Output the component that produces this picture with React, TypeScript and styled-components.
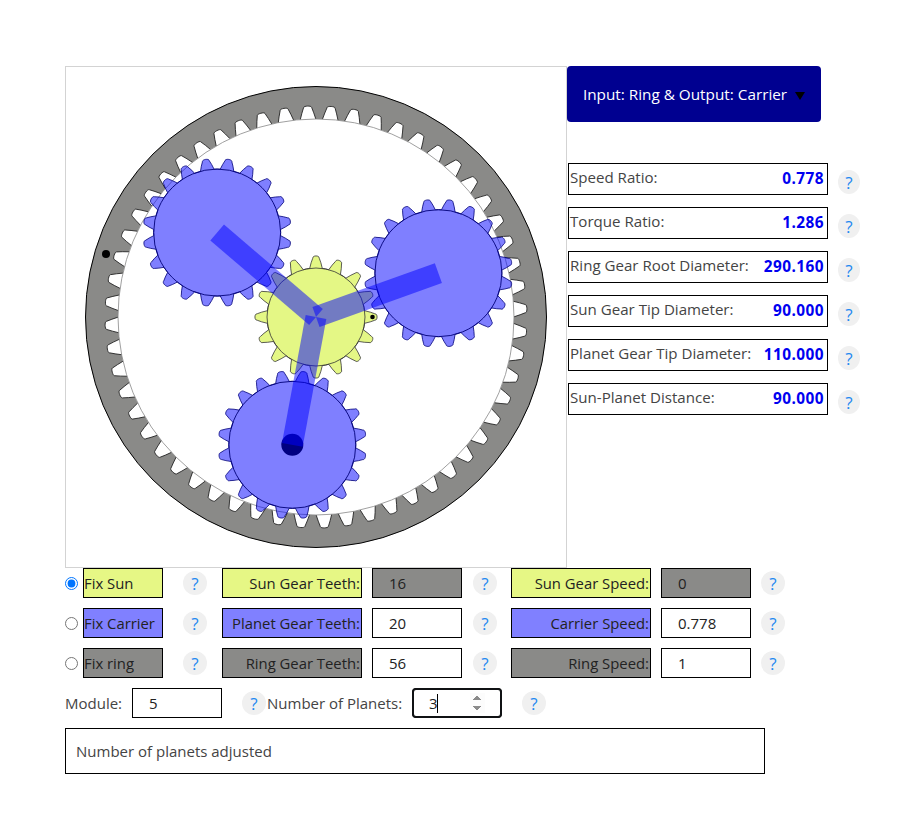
import React from 'react';
import styled, { createGlobalStyle } from 'styled-components';

const Global = createGlobalStyle`
  html, body { margin: 0; padding: 0; background: #fff; }
  body { font-family: "Open Sans", "Noto Sans", sans-serif; font-size: 15px; color: #444; }
`;

const Page = styled.div`
  width: 913px;
  height: 819px;
  box-sizing: border-box;
  padding: 66px 0 0 65px;
`;
const Top = styled.div`
  display: flex;
`;
const Canvas = styled.svg`
  display: block;
  flex: none;
  width: 500px;
  height: 500px;
  border: 1px solid #d3d3d3;
`;
const Side = styled.div`
  display: flex;
  flex-direction: column;
  flex: none;
`;
const Dropdown = styled.button`
  display: flex;
  align-items: center;
  justify-content: center;
  width: 254px;
  height: 56px;
  border: none;
  border-radius: 4px;
  background: #000090;
  color: #fff;
  font: inherit;
  font-size: 15.3px;
  padding: 0;
  gap: 8px;
`;
const Caret = styled.span`
  width: 0;
  height: 0;
  margin-top: 3px;
  border-left: 5px solid transparent;
  border-right: 5px solid transparent;
  border-top: 8px solid #000;
`;
const Stats = styled.div`
  display: flex;
  flex-direction: column;
  gap: 12px;
  margin: 41px 0 0 1px;
`;
const StatRow = styled.div`
  display: flex;
  align-items: flex-start;
  gap: 10px;
`;
const StatBox = styled.div`
  display: flex;
  justify-content: space-between;
  align-items: flex-start;
  box-sizing: border-box;
  width: 260px;
  height: 32px;
  border: 1px solid #000;
  padding: 3px 3px 0 1px;
  white-space: nowrap;
  font-size: 15.1px;
`;
const StatValue = styled.b`
  color: #0000f0;
  font-size: 15.4px;
  letter-spacing: 0.45px;
  padding-top: 2px;
  line-height: 20px;
`;
const StatLabel = styled.span`
  line-height: 20px;
`;
const Help = styled.span<{ $w?: number; $mt?: number; $ml?: number }>`
  display: flex;
  flex: none;
  align-items: center;
  justify-content: center;
  width: ${p => p.$w ?? 24}px;
  height: 24px;
  border-radius: 50%;
  background: #f0f0f0;
  color: #1e88f0;
  font-size: 17px;
  margin-top: ${p => p.$mt ?? 0}px;
  margin-left: ${p => p.$ml ?? 0}px;
`;
const Rows = styled.div`
  display: flex;
  flex-direction: column;
  gap: 10px;
`;
const Row = styled.div`
  display: flex;
  align-items: center;
  height: 30px;
`;
const Radio = styled.input.attrs({ type: 'radio' })`
  flex: none;
  width: 13px;
  height: 13px;
  margin: 0 5px 0 0;
`;
const Swatch = styled.div<{ $bg: string; $w: number; $ml?: number; $right?: boolean }>`
  box-sizing: border-box;
  flex: none;
  width: ${p => p.$w}px;
  height: 30px;
  margin-left: ${p => p.$ml ?? 0}px;
  border: 1px solid #000;
  background: ${p => p.$bg};
  color: #222;
  padding: 0 1px 0 ${p => (p.$right ? 1 : 0)}px;
  line-height: 28px;
  font-size: 14.85px;
  text-align: ${p => (p.$right ? 'right' : 'left')};
  white-space: nowrap;
`;
const Field = styled.input<{ $off?: boolean; $ml?: number }>`
  box-sizing: border-box;
  flex: none;
  width: 90px;
  height: 30px;
  margin: 0 0 0 ${p => p.$ml ?? 10}px;
  border: 1px solid #000;
  background: ${p => (p.$off ? '#8a8a88' : '#fff')};
  color: #222;
  padding: 1px 2px 1px 16px;
  font: inherit;
  font-size: 15px;
  outline: none;
  caret-color: transparent;
  &:focus {
    outline: 2px solid #101214;
    outline-offset: -2px;
    border-radius: 4px;
  }
  &::-webkit-inner-spin-button {
    opacity: 1;
    margin-right: 14px;
  }
`;
const FieldWrap = styled.span`
  position: relative;
  display: flex;
  flex: none;
`;
const TextCaret = styled.span`
  position: absolute;
  left: 25px;
  top: 6px;
  width: 1px;
  height: 19px;
  background: #000;
`;
const Plain = styled.span<{ $w: number; $ml?: number }>`
  flex: none;
  width: ${p => p.$w}px;
  margin-left: ${p => p.$ml ?? 0}px;
  white-space: nowrap;
`;
const Message = styled.div`
  box-sizing: border-box;
  width: 700px;
  height: 46px;
  border: 1px solid #000;
  padding-left: 10px;
  line-height: 44px;
`;

const rad = (d: number) => (d * Math.PI) / 180;
const ptAt = (cx: number, cy: number, r: number, a: number) =>
  `${(cx + r * Math.cos(rad(a))).toFixed(2)} ${(cy + r * Math.sin(rad(a))).toFixed(2)}`;

type Tooth = {
  cx: number;
  cy: number;
  n: number;
  rb: number;
  rt: number;
  phase: number;
  wb: number;
  wt: number;
  shoulder: number;
  bulge: number;
};

const toothSeg = (g: Tooth, a: number) => {
  const P = (r: number, x: number) => ptAt(g.cx, g.cy, r, x);
  const h = g.rt - g.rb;
  const mid = g.rb + h * 0.5;
  const wm = g.wt + (g.wb - g.wt) * g.bulge;
  const sh = g.rt - h * g.shoulder;
  const top = g.rt + h * g.shoulder * 0.45;
  return `Q ${P(mid, a - wm)} ${P(sh, a - g.wt)} C ${P(top, a - g.wt)} ${P(top, a + g.wt)} ${P(sh, a + g.wt)} Q ${P(
    mid,
    a + wm
  )} ${P(g.rb, a + g.wb)}`;
};
const gearPath = (g: Tooth) => {
  let d = '';
  for (let i = 0; i < g.n; i++) {
    const a = g.phase + (360 / g.n) * i;
    const start = ptAt(g.cx, g.cy, g.rb, a - g.wb);
    d += `${i === 0 ? 'M' : `A ${g.rb} ${g.rb} 0 0 1`} ${start} ${toothSeg(g, a)} `;
  }
  return `${d}A ${g.rb} ${g.rb} 0 0 1 ${ptAt(g.cx, g.cy, g.rb, g.phase - g.wb)} Z`;
};
const teethOnly = (g: Tooth) => {
  let d = '';
  for (let i = 0; i < g.n; i++) {
    const a = g.phase + (360 / g.n) * i;
    d += `M ${ptAt(g.cx, g.cy, g.rb, a - g.wb)} ${toothSeg(g, a)} `;
  }
  return d;
};

const armAngles = [-19.7, 100.5, 220.5];
const planets = armAngles.map(a => ({
  cx: 250 + 130 * Math.cos(rad(a)),
  cy: 250 + 130 * Math.sin(rad(a)),
}));

const arm = (a: number) => {
  const w = 10.5;
  const n = a + 90;
  const ex = 250 + 130 * Math.cos(rad(a));
  const ey = 250 + 130 * Math.sin(rad(a));
  return `M ${ptAt(250, 250, w, n)} L ${ptAt(ex, ey, w, n)} L ${ptAt(ex, ey, w, n + 180)} L ${ptAt(250, 250, w, n + 180)} Z`;
};

const ringTeeth: Tooth = { cx: 250, cy: 250, n: 56, rb: 198, rt: 211, phase: -92.3, wb: 2.25, wt: 1.1, shoulder: 0.1, bulge: 0.5 };
const sunGear: Tooth = { cx: 250, cy: 250, n: 16, rb: 49, rt: 61, phase: 0, wb: 7.4, wt: 3.2, shoulder: 0.18, bulge: 0.47 };

const Gears = () => (
  <Canvas viewBox="0 0 500 500">
    <circle cx={250} cy={250} r={230.5} fill="#8a8a88" stroke="#000" strokeWidth={1} />
    <path d={gearPath(ringTeeth)} fill="#fff" />
    <path d={teethOnly(ringTeeth)} fill="none" stroke="#222" strokeWidth={0.9} />
    <circle cx={250} cy={250} r={198} fill="none" stroke="#888" strokeWidth={0.8} />
    <path d={gearPath(sunGear)} fill="#e4f785" stroke="#333" strokeWidth={0.8} />
    <circle cx={250} cy={250} r={49} fill="none" stroke="#333" strokeWidth={0.8} />
    <circle cx={306.5} cy={250} r={2.3} fill="#000" />
    {planets.map((p, i) => {
      const g: Tooth = { cx: p.cx, cy: p.cy, n: 20, rb: 63.5, rt: 74, phase: 9, wb: 6.2, wt: 2.8, shoulder: 0.18, bulge: 0.47 };
      return (
        <g key={i}>
          <path d={gearPath(g)} fill="rgba(0,0,255,0.5)" stroke="#000078" strokeWidth={0.8} />
          <circle cx={p.cx} cy={p.cy} r={63.5} fill="none" stroke="#000078" strokeWidth={0.9} />
        </g>
      );
    })}
    <circle cx={planets[1].cx} cy={planets[1].cy} r={11} fill="#000080" />
    {armAngles.map(a => (
      <path key={a} d={arm(a)} fill="rgba(0,0,255,0.5)" />
    ))}
    <circle cx={40} cy={187} r={4} fill="#000" />
  </Canvas>
);

const stats = [
  ['Speed Ratio:', '0.778'],
  ['Torque Ratio:', '1.286'],
  ['Ring Gear Root Diameter:', '290.160'],
  ['Sun Gear Tip Diameter:', '90.000'],
  ['Planet Gear Tip Diameter:', '110.000'],
  ['Sun-Planet Distance:', '90.000'],
];

const SUN = '#e6f785';
const PLANET = '#8080ff';
const RING = '#8a8a88';

const rows = [
  { fix: 'Fix Sun', bg: SUN, on: true, teeth: 'Sun Gear Teeth:', tv: '16', toff: true, speed: 'Sun Gear Speed:', sv: '0', soff: true },
  { fix: 'Fix Carrier', bg: PLANET, on: false, teeth: 'Planet Gear Teeth:', tv: '20', toff: false, speed: 'Carrier Speed:', sv: '0.778', soff: false },
  { fix: 'Fix ring', bg: RING, on: false, teeth: 'Ring Gear Teeth:', tv: '56', toff: false, speed: 'Ring Speed:', sv: '1', soff: false },
];

export default function App() {
  return (
    <Page>
      <Global />
      <Top>
        <Gears />
        <Side>
          <Dropdown>
            Input: Ring &amp; Output: Carrier
            <Caret />
          </Dropdown>
          <Stats>
            {stats.map(([l, v]) => (
              <StatRow key={l}>
                <StatBox>
                  <StatLabel>{l}</StatLabel>
                  <StatValue>{v}</StatValue>
                </StatBox>
                <Help $w={22} $mt={7}>?</Help>
              </StatRow>
            ))}
          </Stats>
        </Side>
      </Top>
      <Rows>
        {rows.map(r => (
          <Row key={r.fix}>
            <Radio name="fix" defaultChecked={r.on} />
            <Swatch $bg={r.bg} $w={80}>{r.fix}</Swatch>
            <Help $ml={20}>?</Help>
            <Swatch $bg={r.bg} $w={140} $ml={15} $right>{r.teeth}</Swatch>
            <Field $off={r.toff} readOnly value={r.tv} />
            <Help $ml={11}>?</Help>
            <Swatch $bg={r.bg} $w={140} $ml={14} $right>{r.speed}</Swatch>
            <Field $off={r.soff} readOnly value={r.sv} />
            <Help $ml={10}>?</Help>
          </Row>
        ))}
        <Row>
          <Plain $w={67}>Module:</Plain>
          <Field $ml={0} readOnly value="5" />
          <Help $ml={20}>?</Help>
          <Plain $w={145} $ml={1}>Number of Planets:</Plain>
          <FieldWrap>
            <Field $ml={0} type="number" defaultValue={3} autoFocus />
            <TextCaret />
          </FieldWrap>
          <Help $ml={20}>?</Help>
        </Row>
        <Message>Number of planets adjusted</Message>
      </Rows>
    </Page>
  );
}
